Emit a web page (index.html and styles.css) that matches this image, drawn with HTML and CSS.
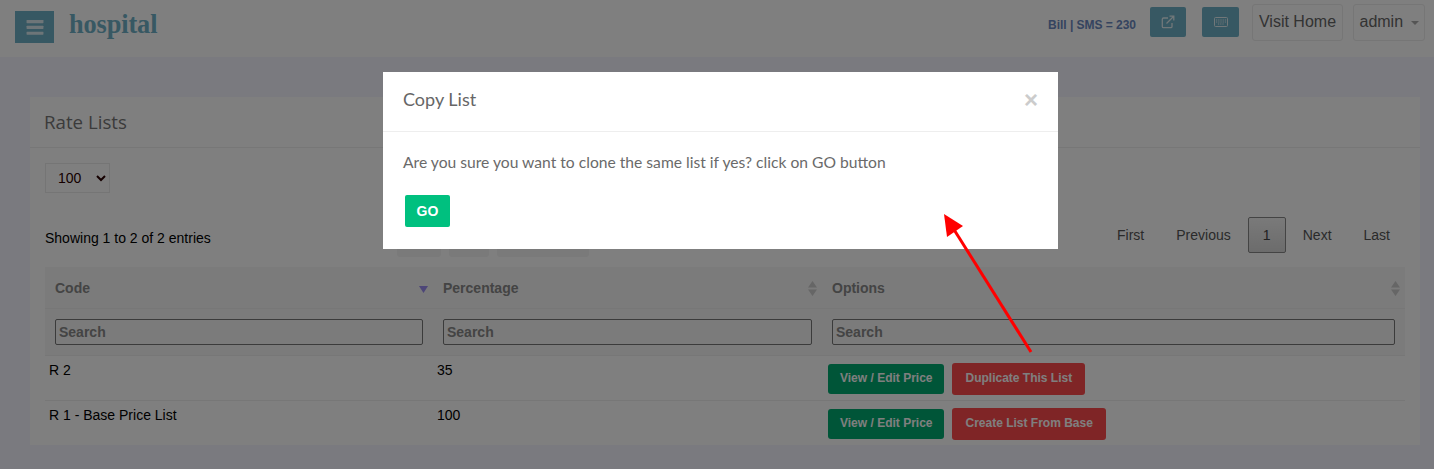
FILE: index.html
```html
<!DOCTYPE html>
<html lang="en">
<head>
<meta charset="utf-8">
<title>Rate Lists</title>
<link rel="stylesheet" href="styles.css">
</head>
<body>
<header class="topbar">
  <button class="toggle" aria-label="Menu">
    <svg width="18" height="16" viewBox="0 0 18 16"><rect x="0" y="0" width="18" height="3.4" rx=".5"/><rect x="0" y="6.2" width="18" height="3.4" rx=".5"/><rect x="0" y="12.4" width="18" height="3.4" rx=".5"/></svg>
  </button>
  <span class="logo">hospital</span>
  <div class="top-right">
    <span class="bill">Bill | SMS = 230</span>
    <button class="icon-btn btn-a" aria-label="Open">
      <svg width="14" height="14" viewBox="0 0 14 14" fill="none" stroke="currentColor" stroke-width="1.3"><path d="M11 8v3.5a1.2 1.2 0 0 1-1.2 1.2H2.5a1.2 1.2 0 0 1-1.2-1.2V4.2A1.2 1.2 0 0 1 2.5 3H7"/><path d="M5.5 8.5 12.5 1.5M8.5 1.2h4.3v4.3"/></svg>
    </button>
    <button class="icon-btn btn-b" aria-label="Keyboard">
      <svg width="14" height="10" viewBox="0 0 14 10" fill="none" stroke="currentColor"><rect x=".5" y=".5" width="13" height="9" rx="1"/><path d="M2 3h10M2 5h10M4 7h6" stroke-dasharray="1 .8"/></svg>
    </button>
    <a class="top-link visit">Visit Home</a>
    <a class="top-link admin">admin <i class="caret"></i></a>
  </div>
</header>

<main class="content">
  <section class="card">
    <h2 class="card-title">Rate Lists</h2>
    <div class="card-body">
      <select class="length"><option>100</option></select>
      <div class="toolbar">
        <span class="info">Showing 1 to 2 of 2 entries</span>
        <div class="dt-buttons">
          <span class="dt-btn w1"></span><span class="dt-btn w2"></span><span class="dt-btn w3"></span>
        </div>
        <nav class="pager">
          <a>First</a><a>Previous</a><a class="current">1</a><a>Next</a><a>Last</a>
        </nav>
      </div>
      <table class="grid">
        <colgroup><col class="col-a"><col class="col-b"><col></colgroup>
        <thead>
          <tr class="heads">
            <th><div class="th-in">Code <svg class="sort" width="9" height="12" viewBox="0 0 9 12"><path d="M0 4h9L4.5 11z" fill="#9a8cf0"/></svg></div></th>
            <th><div class="th-in">Percentage <svg class="sort" width="9" height="15" viewBox="0 0 9 15"><path d="M4.5 0 9 6.5H0zM0 8.5h9L4.5 15z" fill="#ccc"/></svg></div></th>
            <th><div class="th-in">Options <svg class="sort" width="9" height="15" viewBox="0 0 9 15"><path d="M4.5 0 9 6.5H0zM0 8.5h9L4.5 15z" fill="#ccc"/></svg></div></th>
          </tr>
          <tr class="filters">
            <th><input placeholder="Search"></th>
            <th><input placeholder="Search"></th>
            <th><input placeholder="Search"></th>
          </tr>
        </thead>
        <tbody>
          <tr>
            <td>R 2</td><td>35</td>
            <td class="opts"><a class="act green">View / Edit Price</a><a class="act red">Duplicate This List</a></td>
          </tr>
          <tr>
            <td>R 1 - Base Price List</td><td>100</td>
            <td class="opts"><a class="act green">View / Edit Price</a><a class="act red">Create List From Base</a></td>
          </tr>
        </tbody>
      </table>
    </div>
  </section>
</main>

<div class="backdrop"></div>

<div class="modal">
  <div class="modal-head">
    <h4>Copy List</h4>
    <span class="close">×</span>
  </div>
  <div class="modal-body">
    <p>Are you sure you want to clone the same list if yes? click on GO button</p>
    <button class="go">GO</button>
  </div>
</div>

<svg class="arrow" width="1434" height="469" viewBox="0 0 1434 469">
  <path d="M1031 352 953 228" stroke="#f00" stroke-width="3" fill="none"/>
  <path d="M944 214 963 226 947 237z" fill="#f00"/>
</svg>
</body>
</html>
```
FILE: styles.css
```css
* { box-sizing: border-box; }
html, body { margin: 0; height: 469px; overflow: hidden; }
body { background: #f5f5fe; font-family: "Liberation Sans", Arial, sans-serif; font-size: 14px; color: #333; }

.topbar { height: 57px; background: #fff; display: flex; align-items: flex-start; padding-left: 15px; }
.toggle { width: 39px; height: 32px; margin-top: 11px; padding: 0; border: 0; background: #6fb0c6; display: flex; align-items: center; justify-content: center; }
.toggle svg { width: 18px; height: 15px; fill: #fff; opacity: .75; }
.logo { margin: 9px 0 0 15px; font-family: "Liberation Serif", serif; font-weight: 700; font-size: 26.3px; line-height: 32px; color: #6fb0c6; letter-spacing: -.1px; }
.top-right { margin-left: auto; display: flex; align-items: flex-start; padding-right: 9px; }
.bill { margin: 18px 14px 0 0; font-size: 12px; font-weight: 700; line-height: 14px; color: #6a88c0; letter-spacing: -.03px; }
.icon-btn { height: 30px; margin-top: 7px; padding: 0; border: 0; border-radius: 2px; background: #6fb0c6; color: #fff; display: flex; align-items: center; justify-content: center; }
.icon-btn svg { opacity: .8; }
.btn-a { width: 36px; margin-right: 16px; }
.btn-b { width: 37px; margin-right: 13px; }
.top-link { height: 37px; margin-top: 4px; border: 1px solid #ececec; border-radius: 3px; font-size: 16px; line-height: 33px; color: #666; text-align: center; }
.visit { width: 91px; margin-right: 10px; }
.admin { width: 72px; }
.caret { display: inline-block; margin-left: 3px; vertical-align: 2px; border-top: 4px solid #aaa; border-left: 4px solid transparent; border-right: 4px solid transparent; }

.content { padding: 40px 14px 0 30px; }
.card { background: #fff; height: 348px; }
.card-title { margin: 0; height: 51px; border-bottom: 1px solid #eee; padding: 13px 14px 0; font-family: "Open Sans", sans-serif; font-size: 18.7px; font-weight: 400; line-height: 24px; color: #777; }
.card-body { padding: 15px 15px 0; }
.length { display: block; width: 65px; height: 30px; padding-left: 8px; border: 1px solid #eaeaea; border-radius: 0; background: #fff; font-family: "Liberation Sans", sans-serif; font-size: 14px; color: #2a0000; }

.toolbar { height: 74px; display: flex; align-items: flex-start; }
.info { margin-top: 37px; line-height: 16px; color: #000; width: 352px; }
.dt-buttons { display: flex; gap: 8px; margin-top: 42px; }
.dt-btn { height: 22px; border-radius: 0 0 3px 3px; background: #f4f4f4; }
.w1 { width: 44px; } .w2 { width: 40px; } .w3 { width: 92px; }
.pager { margin-left: auto; margin-right: 1px; display: flex; align-items: center; margin-top: 24px; }
.pager a { padding: 0 14px; line-height: 36px; color: #555; height: 36px; margin-left: 4px; }
.pager a.current { padding: 0; width: 38px; text-align: center; margin: 0 -1px 0 3px; border: 1px solid #888; border-radius: 2px; line-height: 34px; background: linear-gradient(#f4f4f4, #d8d8d8); color: #444; }

.grid { width: 1360px; table-layout: fixed; border-collapse: collapse; }
.col-a { width: 388px; }
.col-b { width: 389px; }
.heads th { height: 41px; padding: 2px 10px 0; background: #f6f6f6; text-align: left; border-bottom: 1px solid #eee; }
.th-in { display: flex; justify-content: space-between; align-items: center; font-size: 14px; font-weight: 700; color: #888; }
.sort { margin-right: -5px; flex: none; }
.filters th { height: 47px; padding: 1px 10px 0; background: #f6f6f6; border-bottom: 1px solid #eee; }
.filters input { display: block; width: 100%; height: 26px; padding: 0 3px; border: 1px solid #777; border-radius: 2px; background: transparent; font: 700 14px "Liberation Sans", sans-serif; }
.filters input::placeholder { color: #888; opacity: 1; }
tbody td { height: 45px; padding: 6px 4px 0; vertical-align: top; border-bottom: 1px solid #eee; color: #000; line-height: 16px; }
tbody tr:last-child td { border-bottom: 0; height: 44px; }
td.opts { padding: 7px 0 0 6px; }
.act { display: inline-block; height: 31px; margin-right: 8px; border-radius: 3px; font-size: 12px; font-weight: 700; line-height: 31px; color: #fff; vertical-align: top; white-space: nowrap; }
.green { background: #00aa70; padding: 0 12px; height: 30px; margin-top: 1px; line-height: 29px; }
.red { background: #ff4a4c; padding: 0 13px; height: 32px; }

.backdrop { position: fixed; inset: 0; background: rgba(0, 0, 0, .5); }
.modal { position: fixed; left: 383px; top: 72px; width: 675px; height: 177px; background: #fff; font-family: "Lato", sans-serif; color: #666; }
.modal-head { height: 60px; border-bottom: 1px solid #eee; padding: 0 20px; display: flex; justify-content: space-between; align-items: center; }
.modal-head h4 { margin: -6px 0 0; font-size: 18px; font-weight: 400; color: #666; }
.close { font-family: "Liberation Sans", sans-serif; font-size: 24px; font-weight: 700; color: #ccc; margin: -4px 0 0; }
.modal-body { padding: 20px 20px 0; }
.modal-body p { margin: 0; font-size: 15.65px; line-height: 20px; color: #6a6a6a; }
.go { display: block; width: 45px; height: 32px; margin: 23px 0 0 2px; padding: 0; border: 0; border-radius: 2px; background: #00c07f; color: #fff; font: 700 14px "Liberation Sans", sans-serif; }

.arrow { position: fixed; left: 0; top: 0; pointer-events: none; }
```
